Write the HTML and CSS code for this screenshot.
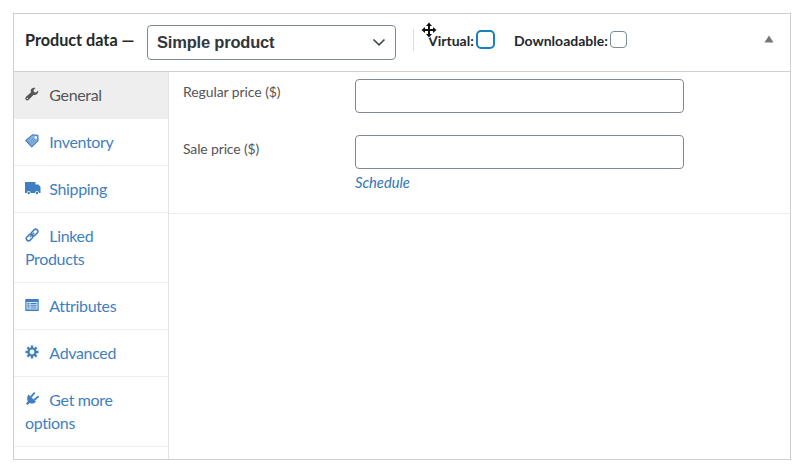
FILE: index.html
```html
<!DOCTYPE html>
<html lang="en">
<head>
<meta charset="utf-8">
<title>Product data</title>
<link rel="stylesheet" href="styles.css">
</head>
<body>
<section class="panel">
  <header class="head">
    <h2 class="title">Product data —</h2>
    <div class="select"><span>Simple product</span>
      <svg width="14" height="9" viewBox="0 0 14 9"><path d="M1.500 1.500 7 6.800 12.500 1.500" fill="none" stroke="#444a50" stroke-width="1.700"/></svg>
    </div>
    <span class="divider"></span>
    <label class="check virtual">Virtual:<span class="box focus"></span></label>
    <label class="check">Downloadable:<span class="box"></span></label>
    <svg class="toggle" width="10" height="8" viewBox="0 0 10 8"><path d="M5 .5 9.500 7.500H.5z" fill="#72777c"/></svg>
    <svg class="cursor" width="16" height="16" viewBox="0 0 16 16"><path d="M8 .5 11 4H9v3h3V5l3.500 3L12 11V9H9v3h2l-3 3.500L5 12h2V9H4v2L.5 8 4 5v2h3V4H5z" fill="#111" stroke="#fff" stroke-width="1.600" paint-order="stroke"/></svg>
  </header>
  <div class="body">
    <nav class="tabs">
      <a class="tab active"><svg class="icon" viewBox="0 0 14 14"><path d="M13.200 3.600 10.800 5.400 8.900 4.900 8.600 3 10.500.9C8.300.2 6.100 1.200 5.700 3.200c-.1.800 0 1.500.3 2.100L.9 10c-.8.800-.8 2 0 2.800s2 .8 2.800 0l5-5.100c2.600.8 5-1.200 4.500-4.100z" fill="currentColor"/><circle cx="2.400" cy="11.400" r=".7" fill="#eee"/></svg>General</a>
      <a class="tab"><svg class="icon" viewBox="0 0 14 14"><path d="M.8 6.500 7.500.8l5.300.6.300 5.300-6.300 6.100z" fill="#8fb7df" stroke="currentColor" stroke-width="1.100" stroke-linejoin="round"/><path d="m2.500 6.500 5 4.700M4 5.200l5 4.700M5.500 3.900l5 4.700M7.500 3.500l3.800 3.600M3.700 8.700 9 3.800M5.300 10.200l5.500-5.100" stroke="currentColor" stroke-width=".4"/><circle cx="10.800" cy="3.500" r="1.200" fill="#fff"/></svg>Inventory</a>
      <a class="tab"><svg class="icon truck" viewBox="0 0 16 14"><path d="M0 1h10.500v2.500h3L15.500 6v6h-1.600a1.900 1.900 0 0 0-3.800 0H5.600a1.900 1.900 0 0 0-3.800 0H0z" fill="currentColor"/><circle cx="3.700" cy="12" r="1.200" fill="currentColor"/><circle cx="12" cy="12" r="1.200" fill="currentColor"/></svg>Shipping</a>
      <a class="tab"><svg class="icon" viewBox="0 0 14 14"><g fill="none" stroke="currentColor" stroke-width="1.500"><rect x="5.900" y="2.300" width="7.400" height="4.400" rx="2.200" transform="rotate(-45 9.600 4.500)"/><rect x=".9" y="7.300" width="7.400" height="4.400" rx="2.200" transform="rotate(-45 4.600 9.500)"/><path d="m5 9 4.200-4.200"/></g></svg>Linked Products</a>
      <a class="tab"><svg class="icon" viewBox="0 0 14 14"><path d="M.3 1h13.400v12H.3z" fill="currentColor"/><path d="M1.500 4h11v7.500h-11z" fill="#d7e6f5"/><path d="M2.500 5h2v1.500h-2zm0 2.200h2v1.500h-2zm0 2.200h2v1h-2zM5.500 5h6v1.300h-6zm0 2.200h6v1.300h-6zm0 2.200h6v1h-6z" fill="currentColor"/></svg>Attributes</a>
      <a class="tab"><svg class="icon" viewBox="0 0 14 14"><circle cx="7" cy="7" r="3.500" fill="none" stroke="currentColor" stroke-width="2.200"/><path d="M7 .5v3M7 10.500v3M.5 7h3M10.500 7h3M2.400 2.400l2.100 2.100M9.500 9.500l2.100 2.100M11.600 2.400 9.500 4.500M4.500 9.500l-2.100 2.100" stroke="currentColor" stroke-width="2.300"/></svg>Advanced</a>
      <a class="tab"><svg class="icon" viewBox="0 0 14 14"><path d="M3.500 2.500 11 9.800c-1.800 1.800-4 2.300-6.200 1.200L2.300 13 1 11.800l1.800-2.600C1.800 7 2 4.500 3.500 2.500z" fill="currentColor"/><path d="m6.200 4.700 3-3.500M9.500 7.700l3.500-3" stroke="currentColor" stroke-width="1.800" stroke-linecap="round"/></svg>Get more options</a>
    </nav>
    <main class="content">
      <div class="fields">
        <div class="field"><label>Regular price ($)</label><input type="text"></div>
        <div class="field"><label>Sale price ($)</label><div><input type="text"><a class="schedule">Schedule</a></div></div>
      </div>
    </main>
  </div>
</section>
</body>
</html>
```
FILE: styles.css
```css
* { box-sizing: border-box; }
body { margin: 0; padding: 13px 9px 0 13px; background: #fff; font-family: Lato, sans-serif; color: #23282d; }
.panel { width: 778px; height: 447px; border: 1px solid #ccd0d4; display: flex; flex-direction: column; }
.head { position: relative; height: 58px; flex: none; border-bottom: 1px solid #ccd0d4; display: flex; align-items: center; padding: 0 16px 5px 11px; }
.title { margin: 0; width: 122px; font-size: 16.200px; line-height: 20px; font-weight: 700; white-space: nowrap; }
.select { width: 249px; height: 35px; margin-top: 5px; border: 1px solid #7e8993; border-radius: 4px; padding: 0 9px; display: flex; align-items: center; justify-content: space-between; font: 700 16.500px/20px "Liberation Sans", sans-serif; letter-spacing: -.2px; color: #32373c; }
.select span { margin-top: -2px; }
.divider { width: 1px; height: 22px; margin: 0 14px 0 17px; background: #dcdfe2; }
.check { display: flex; align-items: center; font-size: 14px; font-weight: 700; white-space: nowrap; }
.virtual { width: 86px; }
.box { width: 17px; height: 17px; margin: -1px 0 0 2px; border: 1px solid #7e8993; border-radius: 4px; }
.box.focus { width: 19px; height: 19px; border: 2px solid #1a7fbd; border-radius: 5px; }
.toggle { margin: -2px 0 0 auto; }
.cursor { position: absolute; left: 407px; top: 8px; }
.body { flex: 1; display: flex; min-height: 0; }
.tabs { width: 155px; border-right: 1px solid #e3e3e3; }
.tab { display: block; padding: 11px 45px 12px 11px; border-bottom: 1px solid #eee; font-size: 16px; line-height: 23px; letter-spacing: -.35px; color: #3f7fc1; }
.active { background: #eee; color: #555; }
.icon { width: 14px; height: 14px; margin-right: 10.350px; vertical-align: 0; }
.truck { width: 16px; margin-right: 8.350px; }
.content { flex: 1; }
.fields { height: 142px; padding: 7px 0 0 14px; border-bottom: 1px solid #eee; }
.field { display: flex; height: 56px; color: #555; }
.field label { width: 172px; padding-top: 4px; font-size: 14px; line-height: 18px; letter-spacing: -.08px; }
.field + .field label { padding-top: 5px; letter-spacing: -.15px; }
.field input { display: block; width: 329px; height: 34px; border: 1px solid #7e8993; border-radius: 4px; background: #fff; }
.schedule { display: block; margin-top: 4px; font-size: 14.700px; line-height: 19px; font-style: italic; color: #2f74b8; }
```
